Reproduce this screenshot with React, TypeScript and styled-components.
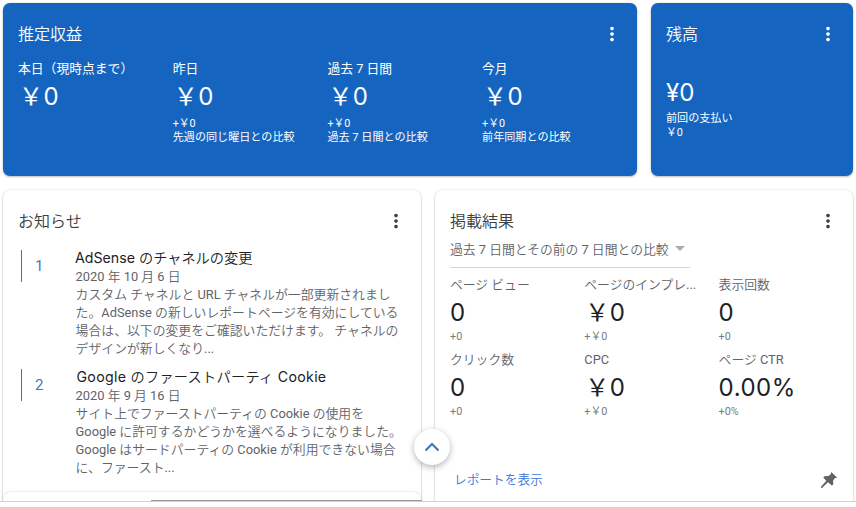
import React from 'react';
import styled, { createGlobalStyle } from 'styled-components';
import { MdMoreVert } from 'react-icons/md';

interface Stat {
  label: string;
  value: string;
  diff?: string;
  note?: string;
}

interface Notice {
  no: number;
  title: string;
  date: string;
  lines: string[];
}

const earnings: Stat[] = [
  { label: '本日（現時点まで）', value: '￥0' },
  { label: '昨日', value: '￥0', diff: '+￥0', note: '先週の同じ曜日との比較' },
  { label: '過去 7 日間', value: '￥0', diff: '+￥0', note: '過去 7 日間との比較' },
  { label: '今月', value: '￥0', diff: '+￥0', note: '前年同期との比較' },
];

const metrics: Stat[] = [
  { label: 'ページ ビュー', value: '0', diff: '+0' },
  { label: 'ページのインプレ...', value: '￥0', diff: '+￥0' },
  { label: '表示回数', value: '0', diff: '+0' },
  { label: 'クリック数', value: '0', diff: '+0' },
  { label: 'CPC', value: '￥0', diff: '+￥0' },
  { label: 'ページ CTR', value: '0.00%', diff: '+0%' },
];

const notices: Notice[] = [
  {
    no: 1,
    title: 'AdSense のチャネルの変更',
    date: '2020 年 10 月 6 日',
    lines: [
      'カスタム チャネルと URL チャネルが一部更新されまし',
      'た。AdSense の新しいレポートページを有効にしている',
      '場合は、以下の変更をご確認いただけます。 チャネルの',
      'デザインが新しくなり...',
    ],
  },
  {
    no: 2,
    title: 'Google のファーストパーティ Cookie',
    date: '2020 年 9 月 16 日',
    lines: [
      'サイト上でファーストパーティの Cookie の使用を',
      'Google に許可するかどうかを選べるようになりました。',
      'Google はサードパーティの Cookie が利用できない場合',
      'に、ファースト...',
    ],
  },
];

const lightFont = "Roboto, 'Noto Sans CJK JP DemiLight', 'Noto Sans CJK JP', sans-serif";

const GlobalStyle = createGlobalStyle`
  * {
    box-sizing: border-box;
  }

  body {
    margin: 0;
    background: #fff;
    font-family: Roboto, 'Noto Sans CJK JP', sans-serif;
    overflow: hidden;
  }
`;

const Page = styled.div`
  position: relative;
  width: 856px;
  height: 502px;
  padding: 3px 3px 0;
  border-bottom: 1px solid #d0d1d3;
  overflow: hidden;
  white-space: nowrap;
`;

const Row = styled.div`
  display: flex;
  gap: 14px;
  margin-bottom: 14px;
`;

const Card = styled.section<{ $width: number; $height: number; $blue?: boolean }>`
  display: flex;
  flex-direction: column;
  flex-shrink: 0;
  width: ${(p) => p.$width}px;
  height: ${(p) => p.$height}px;
  padding-left: 15px;
  border-radius: 7px;
  background: ${(p) => (p.$blue ? '#1565c0' : '#fff')};
  color: ${(p) => (p.$blue ? '#fff' : '#5f6368')};
  box-shadow: 0 1px 2px rgba(60, 64, 67, 0.3), 0 0 2px rgba(60, 64, 67, 0.22);
`;

const CardHeader = styled.header<{ $dark?: boolean }>`
  display: flex;
  justify-content: space-between;
  align-items: center;
  height: 24px;
  margin-top: 19px;
  padding-right: 14px;
  color: ${(p) => (p.$dark ? '#3c4043' : '#fff')};

  svg {
    width: 22px;
    height: 22px;
  }
`;

const Title = styled.h2`
  margin: 0;
  padding-top: 2px;
  font-size: 16px;
  font-weight: 350;
  line-height: 24px;
`;

const EarningsGrid = styled.div`
  display: grid;
  grid-template-columns: repeat(4, 154.7px);
  margin-top: 13px;
`;

const Label = styled.div<{ $dim?: boolean }>`
  font-family: ${(p) => (p.$dim ? lightFont : 'inherit')};
  font-size: 12.8px;
  line-height: 20px;
`;

const Value = styled.div<{ $dark?: boolean; $yen?: boolean }>`
  height: ${(p) => (p.$dark ? 35 : 38)}px;
  padding-left: ${(p) => (p.$yen ? 1 : 0)}px;
  font-family: Inter, 'Noto Sans CJK JP', sans-serif;
  font-size: 24px;
  line-height: 36px;
  letter-spacing: 0.5px;
  color: ${(p) => (p.$dark ? '#202124' : '#fff')};
`;

const Diff = styled.div<{ $dim?: boolean }>`
  font-size: 10.8px;
  line-height: 14px;
  color: ${(p) => (p.$dim ? '#777b80' : 'inherit')};
`;

const Note = styled.div`
  font-size: 11.1px;
  line-height: 14px;
`;

const Balance = styled.div`
  margin-top: 29px;

  ${Value} {
    height: 37px;
    letter-spacing: 0;
  }
`;

const NoticeItem = styled.article<{ $first?: boolean }>`
  display: flex;
  margin-top: ${(p) => (p.$first ? 15 : 9)}px;
  padding-left: 3px;
`;

const Marker = styled.div`
  display: flex;
  align-items: center;
  width: 54px;
  height: 32px;
  margin-top: 2px;
  padding-left: 13px;
  border-left: 1px solid #3c78b8;
  color: #4374c4;
  font-size: 15px;
`;

const NoticeTitle = styled.div<{ $indent?: boolean }>`
  padding-left: ${(p) => (p.$indent ? 1.5 : 0)}px;
  font-family: Inter, 'Noto Sans CJK JP DemiLight', 'Noto Sans CJK JP', sans-serif;
  font-size: 14.2px;
  line-height: 20px;
  letter-spacing: ${(p) => (p.$indent ? 0.28 : 0)}px;
  color: #202124;
`;

const NoticeText = styled.div`
  padding-left: 0.6px;
  font-family: ${lightFont};
  font-size: 12.85px;
  line-height: 18px;
`;

const NextCard = styled.div`
  height: 20px;
  margin: auto 0 0 -15px;
  border-radius: 7px 7px 0 0;
  box-shadow: 0 0 2px rgba(60, 64, 67, 0.3);
`;

const Select = styled.div`
  display: flex;
  align-items: center;
  gap: 6px;
  width: 240px;
  height: 35px;
  padding-bottom: 3px;
  border-bottom: 1px solid #d3d4d6;
  font-family: ${lightFont};
  font-size: 12.8px;

  &::after {
    content: '';
    border: 5px solid transparent;
    border-top-color: #a9abae;
    border-bottom: 0;
  }
`;

const MetricsGrid = styled.div`
  display: grid;
  grid-template-columns: repeat(3, 134.3px);
  grid-auto-rows: 75px;
  margin-top: 7px;
`;

const CardFooter = styled.footer`
  display: flex;
  justify-content: space-between;
  align-items: center;
  margin-top: 44px;
  padding: 0 15px 0 4px;
`;

const ReportLink = styled.a`
  color: #3c78d8;
  font-size: 12.7px;
  font-weight: 350;
  line-height: 22px;
`;

const ScrollTopButton = styled.button`
  position: absolute;
  left: 414px;
  top: 429px;
  display: flex;
  align-items: center;
  justify-content: center;
  width: 36px;
  height: 36px;
  padding: 0;
  border: 0;
  border-radius: 50%;
  background: #fff;
  box-shadow: 0 2px 6px rgba(60, 64, 67, 0.4);
`;

const ScrollBar = styled.div`
  position: absolute;
  left: 151px;
  top: 500px;
  width: 271px;
  height: 1px;
  background: #9a9b9d;
`;

const PinIcon = () => (
  <svg width="18" height="18" viewBox="0 0 18 18" fill="#5f6368">
    <path d="M11.2 1 17.2 6.8 14.8 7.3 13.1 9.6 13.3 13.3 11.9 14.6 8 11.2 2.2 16.8 1 16.9 1 15.7 6.3 9.7 3.3 6.4 4.5 5.2 8.4 5.1 10.8 3.3Z" />
  </svg>
);

const App: React.FC = () => (
  <>
    <GlobalStyle />
    <Page>
      <Row>
        <Card $width={634} $height={173} $blue>
          <CardHeader>
            <Title>推定収益</Title>
            <MdMoreVert />
          </CardHeader>
          <EarningsGrid>
            {earnings.map((item) => (
              <div key={item.label}>
                <Label>{item.label}</Label>
                <Value $yen>{item.value}</Value>
                <Diff>{item.diff}</Diff>
                <Note>{item.note}</Note>
              </div>
            ))}
          </EarningsGrid>
        </Card>
        <Card $width={202} $height={173} $blue>
          <CardHeader>
            <Title>残高</Title>
            <MdMoreVert />
          </CardHeader>
          <Balance>
            <Value>¥0</Value>
            <Note>前回の支払い</Note>
            <Diff>￥0</Diff>
          </Balance>
        </Card>
      </Row>
      <Row>
        <Card $width={418} $height={322}>
          <CardHeader $dark>
            <Title>お知らせ</Title>
            <MdMoreVert />
          </CardHeader>
          {notices.map((notice) => (
            <NoticeItem key={notice.no} $first={notice.no === 1}>
              <Marker>{notice.no}</Marker>
              <div>
                <NoticeTitle $indent={notice.no !== 1}>{notice.title}</NoticeTitle>
                <NoticeText>{notice.date}</NoticeText>
                {notice.lines.map((line) => (
                  <NoticeText key={line}>{line}</NoticeText>
                ))}
              </div>
            </NoticeItem>
          ))}
          <NextCard />
        </Card>
        <Card $width={418} $height={322}>
          <CardHeader $dark>
            <Title>掲載結果</Title>
            <MdMoreVert />
          </CardHeader>
          <Select>過去 7 日間とその前の 7 日間との比較</Select>
          <MetricsGrid>
            {metrics.map((item) => (
              <div key={item.label}>
                <Label $dim>{item.label}</Label>
                <Value $dark $yen={item.value.startsWith('￥')}>{item.value}</Value>
                <Diff $dim>{item.diff}</Diff>
              </div>
            ))}
          </MetricsGrid>
          <CardFooter>
            <ReportLink>レポートを表示</ReportLink>
            <PinIcon />
          </CardFooter>
        </Card>
      </Row>
      <ScrollBar />
      <ScrollTopButton>
        <svg width="16" height="10" viewBox="0 0 16 10" fill="none" stroke="#3f74bd" strokeWidth="2">
          <path d="M1.5 8.5 8 2l6.5 6.5" />
        </svg>
      </ScrollTopButton>
    </Page>
  </>
);

export default App;
